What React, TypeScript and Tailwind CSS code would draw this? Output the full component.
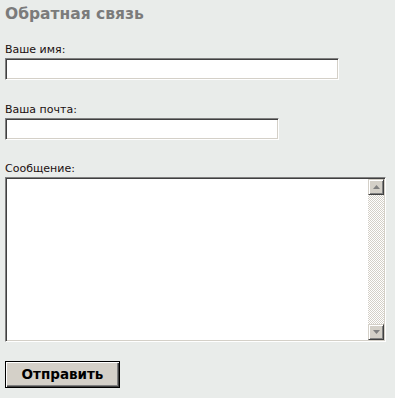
const font = { fontFamily: '"DejaVu Sans", Verdana, sans-serif' };

const Field = ({ label, width }: { label: string; width: string }) => (
  <div className="flex flex-col">
    <label className="text-[11px] leading-[13px] text-[#1a0f0f] mb-[2px]">{label}</label>
    <input
      type="text"
      className={`${width} h-[22px] bg-white border border-t-[#808080] border-l-[#808080] border-b-white border-r-white shadow-[inset_1px_1px_0_#404040,inset_-1px_-1px_0_#d4d0c8] outline-none px-1 text-[11px]`}
    />
  </div>
);

export default function App() {
  return (
    <div className="w-[395px] h-[398px] bg-[#e9ecea] pl-[5px] pt-[5px]" style={font}>
      <h2 className="text-[15.5px] leading-[18px] font-bold text-[#7b7b7b]">Обратная связь</h2>

      <div className="mt-[20px]">
        <Field label="Ваше имя:" width="w-[334px]" />
      </div>
      <div className="mt-[23px]">
        <Field label="Ваша почта:" width="w-[274px]" />
      </div>

      <div className="mt-[22px] flex flex-col">
        <label className="text-[11px] leading-[13px] text-[#1a0f0f] mb-[2px]">Сообщение:</label>
        <div className="w-[381px] h-[165px] flex bg-white border border-t-[#808080] border-l-[#808080] border-b-white border-r-white shadow-[inset_1px_1px_0_#404040,inset_-1px_-1px_0_#d4d0c8] p-[1px]">
          <div className="flex-1" />
          <div className="w-[16px] flex flex-col">
            <div className="h-[16px] bg-[#d4d0c8] border border-t-[#d4d0c8] border-l-[#d4d0c8] border-b-[#404040] border-r-[#404040] shadow-[inset_1px_1px_0_#fff,inset_-1px_-1px_0_#808080] flex items-center justify-center">
              <svg width="7" height="4" viewBox="0 0 7 4"><path d="M3.5 0L7 4H0z" fill="#808080" /></svg>
            </div>
            <div className="flex-1 bg-[conic-gradient(#d4d0c8_25%,#fff_0_50%,#d4d0c8_0_75%,#fff_0)] bg-size-[2px_2px]" />
            <div className="h-[16px] bg-[#d4d0c8] border border-t-[#d4d0c8] border-l-[#d4d0c8] border-b-[#404040] border-r-[#404040] shadow-[inset_1px_1px_0_#fff,inset_-1px_-1px_0_#808080] flex items-center justify-center">
              <svg width="7" height="4" viewBox="0 0 7 4"><path d="M0 0H7L3.5 4z" fill="#808080" /></svg>
            </div>
          </div>
        </div>
      </div>

      <button className="mt-[19px] w-[115px] h-[27px] bg-[#d4d0c8] border border-black shadow-[inset_1px_1px_0_#fff,inset_-1px_-1px_0_#404040,inset_-2px_-2px_0_#808080] text-[13.5px] font-bold text-black">
        Отправить
      </button>
    </div>
  );
}
